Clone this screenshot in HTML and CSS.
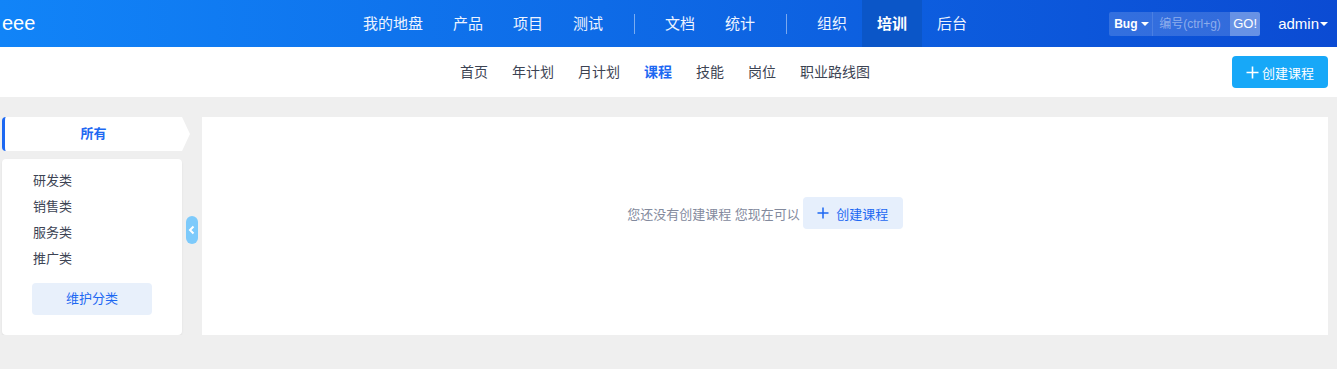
FILE: index.html
```html
<!DOCTYPE html>
<html lang="zh-CN">

<head>
    <meta charset="UTF-8">
    <meta name="viewport" content="width=device-width, initial-scale=1.0">
    <title>课程 - eee</title>
    <link rel="stylesheet" href="styles.css">
</head>

<body>
    <header class="header">
        <div class="logo">eee</div>
        <nav class="main-nav">
            <a class="nav-item">我的地盘</a>
            <a class="nav-item">产品</a>
            <a class="nav-item">项目</a>
            <a class="nav-item">测试</a>
            <span class="nav-divider"></span>
            <a class="nav-item">文档</a>
            <a class="nav-item">统计</a>
            <span class="nav-divider"></span>
            <a class="nav-item">组织</a>
            <a class="nav-item active">培训</a>
            <a class="nav-item">后台</a>
        </nav>
        <div class="header-tools">
            <div class="search-box">
                <span class="search-type">Bug<span class="caret"></span></span>
                <span class="search-input">编号(ctrl+g)</span>
                <span class="search-go">GO!</span>
            </div>
            <div class="user-menu">admin<span class="caret"></span></div>
        </div>
    </header>

    <div class="subnav">
        <div></div>
        <nav class="sub-menu">
            <a class="sub-item">首页</a>
            <a class="sub-item">年计划</a>
            <a class="sub-item">月计划</a>
            <a class="sub-item active">课程</a>
            <a class="sub-item">技能</a>
            <a class="sub-item">岗位</a>
            <a class="sub-item">职业路线图</a>
        </nav>
        <div class="subnav-actions">
            <a class="btn-create">
                <svg class="plus" width="13" height="13" viewBox="0 0 13 13">
                    <path d="M6.5 0.5 V12.5 M0.5 6.5 H12.5" stroke="currentColor" stroke-width="1.6" fill="none" />
                </svg>创建课程
            </a>
        </div>
    </div>

    <main class="content">
        <aside class="sidebar">
            <div class="side-tab">所有</div>
            <div class="side-card">
                <ul class="cat-list">
                    <li>研发类</li>
                    <li>销售类</li>
                    <li>服务类</li>
                    <li>推广类</li>
                </ul>
                <a class="btn-manage">维护分类</a>
            </div>
            <!-- 折叠侧边栏 -->
            <span class="side-toggle">
                <svg width="8" height="10" viewBox="0 0 8 10">
                    <path d="M5.5 1.5 L2 5 L5.5 8.5" fill="none" stroke="#fff" stroke-width="2" />
                </svg>
            </span>
        </aside>

        <section class="panel">
            <div class="empty-tip">
                <span>您还没有创建课程 您现在可以</span>
                <a class="btn-empty">
                    <svg class="plus" width="12" height="12" viewBox="0 0 12 12">
                        <path d="M6 0.5 V11.5 M0.5 6 H11.5" stroke="currentColor" stroke-width="1.5" fill="none" />
                    </svg>创建课程
                </a>
            </div>
        </section>
    </main>
</body>

</html>
```

FILE: styles.css
```css
body {
    margin: 0;
    font-family: "Liberation Sans", "Noto Sans CJK SC", sans-serif;
    background-color: #efefef;
    color: #3c4353;
}

a {
    cursor: pointer;
}

.header {
    display: grid;
    grid-template-columns: 1fr auto 1fr;
    align-items: center;
    height: 47px;
    padding: 0 9px 0 2px;
    background: linear-gradient(90deg, #1184f8 0%, #0e6be7 45%, #0b4bd3 100%);
    color: #fff;
}

.logo {
    font-size: 20px;
    line-height: 47px;
}

.main-nav {
    display: flex;
    align-items: center;
    height: 47px;
}

.nav-item {
    padding: 0 15px;
    font-size: 15px;
    line-height: 47px;
    color: #eef4ff;
}

.nav-item.active {
    background-color: #0b56c8;
    font-weight: bold;
    color: #fff;
}

.nav-divider {
    width: 1px;
    height: 20px;
    margin: 0 15px 0 16px;
    background-color: rgba(255, 255, 255, 0.45);
}

.header-tools {
    display: flex;
    justify-content: flex-end;
    align-items: center;
    gap: 18px;
}

.search-box {
    display: flex;
    height: 24px;
    font-size: 12px;
    line-height: 24px;
    border-radius: 2px;
    overflow: hidden;
    white-space: nowrap;
}

.search-type {
    width: 44px;
    padding-left: 5px;
    box-sizing: border-box;
    background-color: rgba(255, 255, 255, 0.16);
    font-weight: bold;
    border-right: 1px solid rgba(255, 255, 255, 0.12);
}

.search-type .caret {
    margin-left: 4px;
}

.search-input {
    width: 77px;
    padding-left: 6px;
    box-sizing: border-box;
    background-color: rgba(255, 255, 255, 0.16);
    color: rgba(255, 255, 255, 0.45);
}

.search-go {
    width: 30px;
    text-align: center;
    background-color: rgba(255, 255, 255, 0.38);
    font-size: 13px;
}

.caret {
    display: inline-block;
    width: 0;
    height: 0;
    vertical-align: middle;
    border-top: 4px solid #fff;
    border-left: 4px solid transparent;
    border-right: 4px solid transparent;
}

.user-menu {
    font-size: 15px;
}

.user-menu .caret {
    margin-left: 1px;
    margin-top: -2px;
}

/* 二级导航 */
.subnav {
    display: grid;
    grid-template-columns: 1fr auto 1fr;
    align-items: center;
    height: 50px;
    padding: 0 9px 0 2px;
    background-color: #fff;
}

.sub-menu {
    display: flex;
}

.sub-item {
    padding: 0 12px;
    font-size: 14px;
    line-height: 20px;
    color: #3c4353;
}

.sub-item.active {
    color: #1d68f2;
    font-weight: bold;
}

.subnav-actions {
    display: flex;
    justify-content: flex-end;
}

.btn-create {
    display: flex;
    align-items: center;
    justify-content: center;
    width: 96px;
    height: 32px;
    border-radius: 4px;
    background-color: #17a8f8;
    color: #fff;
    font-size: 13px;
}

.plus {
    margin-right: 3px;
}

/* 内容 */
.content {
    display: flex;
    gap: 20px;
    padding: 20px 9px 0 2px;
}

.sidebar {
    position: relative;
    width: 180px;
    flex-shrink: 0;
}

.side-tab {
    height: 34px;
    line-height: 34px;
    text-align: center;
    font-size: 13px;
    font-weight: bold;
    color: #1d68f2;
    background-color: #fff;
    border-left: 3px solid #1d68f2;
    border-radius: 4px 0 0 4px;
    margin-right: -8px;
    padding-right: 8px;
    clip-path: polygon(0 0, calc(100% - 8px) 0, 100% 50%, calc(100% - 8px) 100%, 0 100%);
}

.side-card {
    margin-top: 8px;
    height: 176px;
    padding: 9px 30px 0 30px;
    box-sizing: border-box;
    background-color: #fff;
    border-radius: 4px;
    box-shadow: 0 1px 2px rgba(0, 0, 0, 0.08);
}

.cat-list {
    list-style: none;
    margin: 0;
    padding: 0 0 0 1px;
    font-size: 13px;
    line-height: 26px;
    color: #3c4353;
}

.btn-manage {
    display: block;
    margin-top: 11px;
    height: 32px;
    line-height: 32px;
    text-align: center;
    font-size: 13px;
    color: #1d68f2;
    background-color: #e8f0fb;
    border-radius: 4px;
}

.side-toggle {
    position: absolute;
    top: 99px;
    right: -16px;
    width: 12px;
    height: 28px;
    border-radius: 6px;
    background-color: #7dcafb;
    display: flex;
    align-items: center;
    justify-content: center;
}

.panel {
    flex: 1;
    height: 218px;
    padding-bottom: 26px;
    box-sizing: border-box;
    background-color: #fff;
    display: flex;
    align-items: center;
    justify-content: center;
}

.empty-tip {
    display: flex;
    align-items: center;
    gap: 3px;
    font-size: 13px;
    color: #838a9d;
}

.btn-empty {
    display: flex;
    align-items: center;
    justify-content: center;
    width: 100px;
    height: 32px;
    border-radius: 4px;
    background-color: #e6effc;
    color: #1d68f2;
}

.btn-empty .plus {
    margin-right: 7px;
}
```
